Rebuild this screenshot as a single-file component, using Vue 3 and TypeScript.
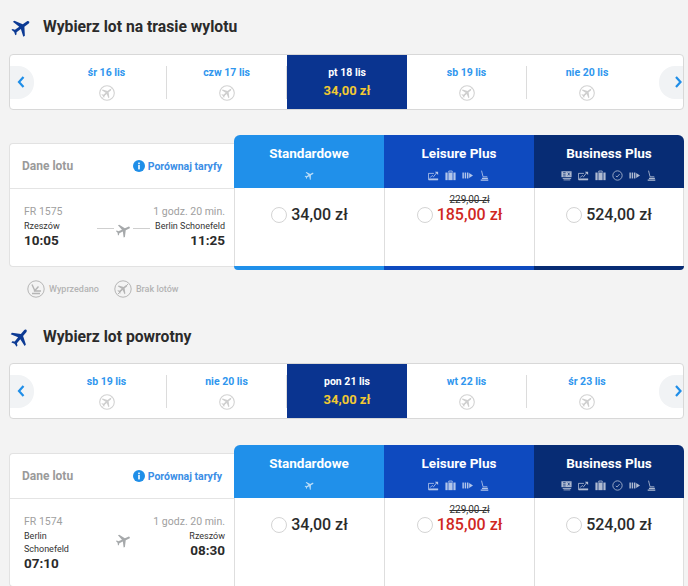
<script setup lang="ts">
interface Day {
  label: string;
  price?: string;
}

interface Fare {
  name: string;
  tone: string;
  icons: string[];
  price: string;
  oldPrice?: string;
}

interface Leg {
  title: string;
  planeTone: string;
  days: Day[];
  flight: string;
  from: string;
  to: string;
  departs: string;
  arrives: string;
  showLines: boolean;
  showLegend: boolean;
}

const plane =
  'M21 16v-2l-8-5V3.5c0-.83-.67-1.5-1.5-1.5S10 2.67 10 3.5V9l-8 5v2l8-2.5V19l-2 1.5V22l3.5-1 3.5 1v-1.5L13 19v-5.5l8 2.5z';

const fares: Fare[] = [
  { name: 'Standardowe', tone: 'standard', icons: ['plane'], price: '34,00 zł' },
  {
    name: 'Leisure Plus',
    tone: 'leisure',
    icons: ['chart', 'bag', 'seats', 'seat'],
    price: '185,00 zł',
    oldPrice: '229,00 zł',
  },
  {
    name: 'Business Plus',
    tone: 'business',
    icons: ['card', 'chart', 'bag', 'clock', 'seats', 'seat'],
    price: '524,00 zł',
  },
];

const legs: Leg[] = [
  {
    title: 'Wybierz lot na trasie wylotu',
    planeTone: 'outbound',
    days: [
      { label: 'śr 16 lis' },
      { label: 'czw 17 lis' },
      { label: 'pt 18 lis', price: '34,00 zł' },
      { label: 'sb 19 lis' },
      { label: 'nie 20 lis' },
    ],
    flight: 'FR 1575',
    from: 'Rzeszów',
    to: 'Berlin Schonefeld',
    departs: '10:05',
    arrives: '11:25',
    showLines: true,
    showLegend: true,
  },
  {
    title: 'Wybierz lot powrotny',
    planeTone: 'inbound',
    days: [
      { label: 'sb 19 lis' },
      { label: 'nie 20 lis' },
      { label: 'pon 21 lis', price: '34,00 zł' },
      { label: 'wt 22 lis' },
      { label: 'śr 23 lis' },
    ],
    flight: 'FR 1574',
    from: 'Berlin Schonefeld',
    to: 'Rzeszów',
    departs: '07:10',
    arrives: '08:30',
    showLines: false,
    showLegend: false,
  },
];
</script>

<template>
  <main class="page">
    <section v-for="leg in legs" :key="leg.flight" class="leg">
      <header class="leg-title" :class="leg.planeTone">
        <svg class="title-plane" viewBox="0 0 24 24">
          <path :d="plane" :transform="leg.showLegend ? 'rotate(55 12 12)' : 'rotate(40 12 12)'" />
        </svg>
        <h2>{{ leg.title }}</h2>
      </header>

      <div class="dates">
        <button class="nav nav-prev" type="button">
          <svg viewBox="0 0 10 14"><path d="M7.5 2 3 7l4.5 5" /></svg>
        </button>
        <div
          v-for="day in leg.days"
          :key="day.label"
          class="day"
          :class="{ active: day.price }"
        >
          <div class="day-inner">
            <span class="day-label">{{ day.label }}</span>
            <span v-if="day.price" class="day-price">{{ day.price }}</span>
            <svg v-else class="no-flight" viewBox="0 0 16 16">
              <circle cx="8" cy="8" r="7.3" />
              <g transform="translate(1.4 1.4) scale(.55)"><path :d="plane" transform="rotate(50 12 12)" /></g>
              <line x1="3.5" y1="12.5" x2="12.5" y2="3.5" />
            </svg>
          </div>
        </div>
        <button class="nav nav-next" type="button">
          <svg viewBox="0 0 10 14"><path d="M3 2l4.5 5L3 12" /></svg>
        </button>
      </div>

      <div class="table">
        <div class="details">
          <div class="details-head">
            <span class="details-title">Dane lotu</span>
            <a class="compare">
              <svg viewBox="0 0 12 12">
                <circle cx="6" cy="6" r="6" />
                <rect x="5.2" y="5" width="1.6" height="4.4" fill="#fff" />
                <rect x="5.2" y="2.6" width="1.6" height="1.6" fill="#fff" />
              </svg>
              Porównaj taryfy
            </a>
          </div>
          <div class="flight">
            <div class="stop">
              <div class="muted">{{ leg.flight }}</div>
              <div class="city">{{ leg.from }}</div>
              <div class="time">{{ leg.departs }}</div>
            </div>
            <div class="route">
              <i v-if="leg.showLines" class="route-line"></i>
              <svg viewBox="0 0 24 24"><path :d="plane" transform="rotate(65 12 12)" /></svg>
              <i v-if="leg.showLines" class="route-line"></i>
            </div>
            <div class="stop stop-end">
              <div class="muted">1 godz. 20 min.</div>
              <div class="city">{{ leg.to }}</div>
              <div class="time">{{ leg.arrives }}</div>
            </div>
          </div>
        </div>

        <div v-for="fare in fares" :key="fare.name" class="fare" :class="fare.tone">
          <div class="fare-head">
            <div class="fare-name">{{ fare.name }}</div>
            <div class="fare-icons">
              <svg v-for="(icon, i) in fare.icons" :key="i" viewBox="0 0 13 13">
                <path v-if="icon === 'plane'" :d="plane" transform="rotate(60 6.5 6.5) scale(.54)" />
                <template v-else-if="icon === 'chart'">
                  <path class="ln" d="M.5 4v7.5h11M.5 4H7" />
                  <path class="ln" d="M2.5 9 5 6.5 6.5 8 10 3.5" />
                  <path d="M8 2h4v4z" />
                  <rect x="1" y="10" width="11" height="2" />
                </template>
                <template v-else-if="icon === 'bag'">
                  <path class="ln" d="M4.5 3V1.2h4V3" />
                  <rect x=".5" y="3" width="2.6" height="9" />
                  <rect x="4" y="3" width="5" height="9" />
                  <rect x="9.9" y="3" width="2.6" height="9" />
                </template>
                <template v-else-if="icon === 'card'">
                  <rect x=".5" y="1.5" width="12" height="7" />
                  <rect x="2" y="9.5" width="10" height="1" />
                  <rect x="3" y="11.2" width="8" height="1" />
                  <path class="cut" d="M2.5 3h3M2.5 5h3M2.5 7h3M8 3l2.5 3.5M10.5 3 8 6.5" />
                </template>
                <template v-else-if="icon === 'clock'">
                  <circle class="ln" cx="6.5" cy="6.5" r="5.5" />
                  <path class="ln" d="M4.5 7 6 8.2 9 4.8" />
                </template>
                <template v-else-if="icon === 'seats'">
                  <rect x=".5" y="3" width="1.7" height="7" />
                  <rect x="3.2" y="3" width="1.7" height="7" />
                  <rect x="5.9" y="3" width="1.7" height="7" />
                  <path d="M8.5 3.5 13 6.5l-4.5 3z" />
                </template>
                <template v-else>
                  <path class="ln" d="M3 .8 4.8 8h5" />
                  <path class="ln thick" d="M3.5 10h7M2 12h9" />
                </template>
              </svg>
            </div>
          </div>
          <div class="fare-body">
            <div class="fare-price">
              <span class="radio"></span>
              <div class="amounts">
                <s class="old-price">{{ fare.oldPrice }}</s>
                <strong class="price" :class="{ promo: fare.oldPrice }">{{ fare.price }}</strong>
              </div>
            </div>
          </div>
        </div>
      </div>

      <div v-if="leg.showLegend" class="legend">
        <span class="legend-item">
          <svg viewBox="0 0 18 18">
            <circle cx="9" cy="9" r="8.2" />
            <path class="legend-mark" d="M5 4.5 8 11h6M11.5 6.5 7 11.5M5 13.5h8" />
          </svg>
          Wyprzedano
        </span>
        <span class="legend-item">
          <svg viewBox="0 0 18 18">
            <circle cx="9" cy="9" r="8.2" />
            <g transform="translate(2.4 2.4) scale(.55)"><path :d="plane" transform="rotate(50 12 12)" /></g>
            <line x1="4" y1="14" x2="14" y2="4" />
          </svg>
          Brak lotów
        </span>
      </div>
    </section>
  </main>
</template>

<style>
html,
body {
  height: 586px;
  overflow: hidden;
  background: #f3f3f3;
}
</style>

<style scoped>
.page {
  height: 586px;
  box-sizing: border-box;
  overflow: hidden;
  padding: 16px 4px 0 9px;
  font-family: Roboto, 'Liberation Sans', sans-serif;
  color: #2b2b2b;
}
.leg {
  margin-bottom: 28px;
}
.leg:last-child .table {
  margin-top: 26px;
}
.leg-title {
  display: flex;
  align-items: center;
  height: 22px;
  gap: 10px;
  padding-left: 1px;
}
.leg-title.inbound {
  margin: 1px 0 -1px;
  padding-left: 0;
  gap: 11px;
}
.title-plane {
  width: 23px;
  height: 23px;
  fill: #0c3a94;
}
.leg-title h2 {
  margin: 0;
  font-size: 15.7px;
  font-weight: 700;
  line-height: 22px;
  color: #2b2b2b;
}

.dates {
  display: flex;
  align-items: stretch;
  height: 56px;
  margin-top: 16px;
  box-sizing: border-box;
  background: #fff;
  border: 1px solid #d8d8d8;
  border-radius: 4px;
}
.nav {
  flex: none;
  align-self: center;
  width: 24px;
  height: 33px;
  padding: 0;
  border: 0;
  background: #f1f3f5;
}
.nav svg {
  display: block;
  width: 10px;
  height: 14px;
  fill: none;
  stroke: #1f8ee8;
  stroke-width: 2.2;
}
.nav-prev {
  margin-right: 13px;
  border-radius: 0 16px 16px 0;
}
.nav-prev svg {
  margin-left: 6px;
}
.nav-next {
  margin-left: 12px;
  border-radius: 16px 0 0 16px;
}
.nav-next svg {
  margin-left: 14px;
}
.day {
  flex: none;
  width: 120px;
  display: flex;
  align-items: center;
}
.day-inner {
  width: 100%;
  height: 33px;
  display: flex;
  flex-direction: column;
  align-items: center;
  border-right: 1px solid #dcdcdc;
}
.day:nth-child(6) .day-inner {
  border-right: 0;
}
.day-label {
  font-size: 10.5px;
  font-weight: 700;
  line-height: 14px;
  color: #2f96ee;
}
.no-flight {
  width: 16px;
  height: 16px;
  margin-top: 5px;
  flex: none;
  fill: #cfcfcf;
}
.no-flight circle {
  fill: none;
  stroke: #d2d2d2;
  stroke-width: 1.1;
}
.no-flight line {
  stroke: #cfcfcf;
  stroke-width: 0.9;
}
.day.active {
  background: #0a3490;
}
.day.active .day-inner {
  border-right: 0;
}
.day.active .day-label {
  color: #fff;
}
.day.active .day-price {
  margin-top: 2px;
  font-size: 13px;
  font-weight: 700;
  line-height: 17px;
  color: #f1c933;
}

.table {
  display: grid;
  grid-template-columns: 225px 150px 150px 150px;
  margin-top: 25px;
}
.details {
  display: flex;
  flex-direction: column;
  margin: 8px 0 3px;
  background: #fff;
  border: 1px solid #e2e2e2;
  border-right: 0;
  border-radius: 4px 0 0 4px;
}
.details-head {
  display: flex;
  align-items: center;
  justify-content: space-between;
  height: 44px;
  padding: 0 12px 0 12px;
  border-bottom: 1px solid #e4e4e4;
}
.details-title {
  font-size: 12px;
  font-weight: 700;
  color: #9a9a9a;
}
.compare {
  display: flex;
  align-items: center;
  gap: 3px;
  font-size: 10.5px;
  font-weight: 700;
  color: #3a8ee6;
}
.compare svg {
  width: 12px;
  height: 12px;
  fill: #1f8ee8;
}
.flight {
  flex: 1;
  min-height: 77px;
  box-sizing: border-box;
  display: grid;
  grid-template-columns: 67px 1fr 70px;
  padding: 15px 9px 16px 14px;
}
.muted {
  font-size: 10.5px;
  line-height: 15px;
  color: #a0a0a0;
  white-space: nowrap;
}
.city {
  margin-top: 1px;
  font-size: 9px;
  line-height: 13px;
  color: #333;
}
.time {
  font-size: 13.5px;
  font-weight: 700;
  line-height: 14px;
  color: #2b2b2b;
}
.stop-end {
  display: flex;
  flex-direction: column;
  align-items: flex-end;
  text-align: right;
  white-space: nowrap;
}
.route {
  display: flex;
  align-items: center;
  justify-content: center;
  gap: 1px;
  height: 16px;
  margin-top: 18px;
}
.route svg {
  flex: none;
  width: 17px;
  height: 17px;
  fill: #a6a9ab;
}
.route-line {
  width: 17px;
  height: 1px;
  margin-top: -3px;
  background: #cfcfcf;
}

.fare {
  display: flex;
  flex-direction: column;
  border-bottom: 4px solid var(--tone);
}
.fare.standard {
  --tone: #2090ea;
  border-radius: 6px 0 0 4px;
}
.fare.leisure {
  --tone: #0e4abf;
}
.fare.business {
  --tone: #072c74;
  border-radius: 0 6px 4px 0;
}
.fare-head {
  height: 53px;
  box-sizing: border-box;
  padding-top: 10px;
  text-align: center;
  background: var(--tone);
  color: #fff;
}
.fare.standard .fare-head {
  border-radius: 6px 0 0 0;
}
.fare.business .fare-head {
  border-radius: 0 6px 0 0;
}
.fare-name {
  font-size: 13.5px;
  font-weight: 700;
  line-height: 16px;
}
.fare-icons {
  display: flex;
  justify-content: center;
  gap: 6px;
  margin-top: 9px;
}
.fare-icons svg {
  width: 11px;
  height: 11px;
  fill: #fff;
  opacity: 0.68;
}
.ln {
  fill: none;
  stroke: #fff;
  stroke-width: 1;
}
.thick {
  stroke-width: 1.4;
}
.cut {
  fill: none;
  stroke: var(--tone);
  stroke-width: 0.8;
}
.fare-body {
  flex: 1;
  box-sizing: border-box;
  background: #fff;
  border-left: 1px solid #dedede;
  padding-top: 6px;
}
.fare.business .fare-body {
  border-right: 1px solid #dedede;
}
.fare-price {
  display: flex;
  align-items: flex-end;
  justify-content: center;
  gap: 4px;
}
.radio {
  width: 14px;
  height: 14px;
  margin-bottom: 2px;
  border: 1px solid #d4d4d4;
  border-radius: 50%;
  background: #fff;
}
.amounts {
  display: flex;
  flex-direction: column;
  align-items: center;
}
.old-price {
  height: 11px;
  font-size: 10px;
  line-height: 12px;
  color: #333;
}
.price {
  font-size: 16px;
  font-weight: 500;
  line-height: 20px;
  color: #2b2b2b;
}
.price.promo {
  color: #d0281f;
}

.legend {
  display: flex;
  gap: 15px;
  margin: 10px 0 0 18px;
  height: 18px;
}
.legend-item {
  display: flex;
  align-items: center;
  gap: 4px;
  font-size: 9px;
  font-weight: 500;
  color: #b3b3b3;
}
.legend-item svg {
  width: 18px;
  height: 18px;
  fill: #b5b5b5;
}
.legend-item circle {
  fill: none;
  stroke: #b5b5b5;
}
.legend-item line {
  stroke: #b5b5b5;
}
.legend-mark {
  fill: none;
  stroke: #b5b5b5;
  stroke-width: 1.4;
}
</style>
